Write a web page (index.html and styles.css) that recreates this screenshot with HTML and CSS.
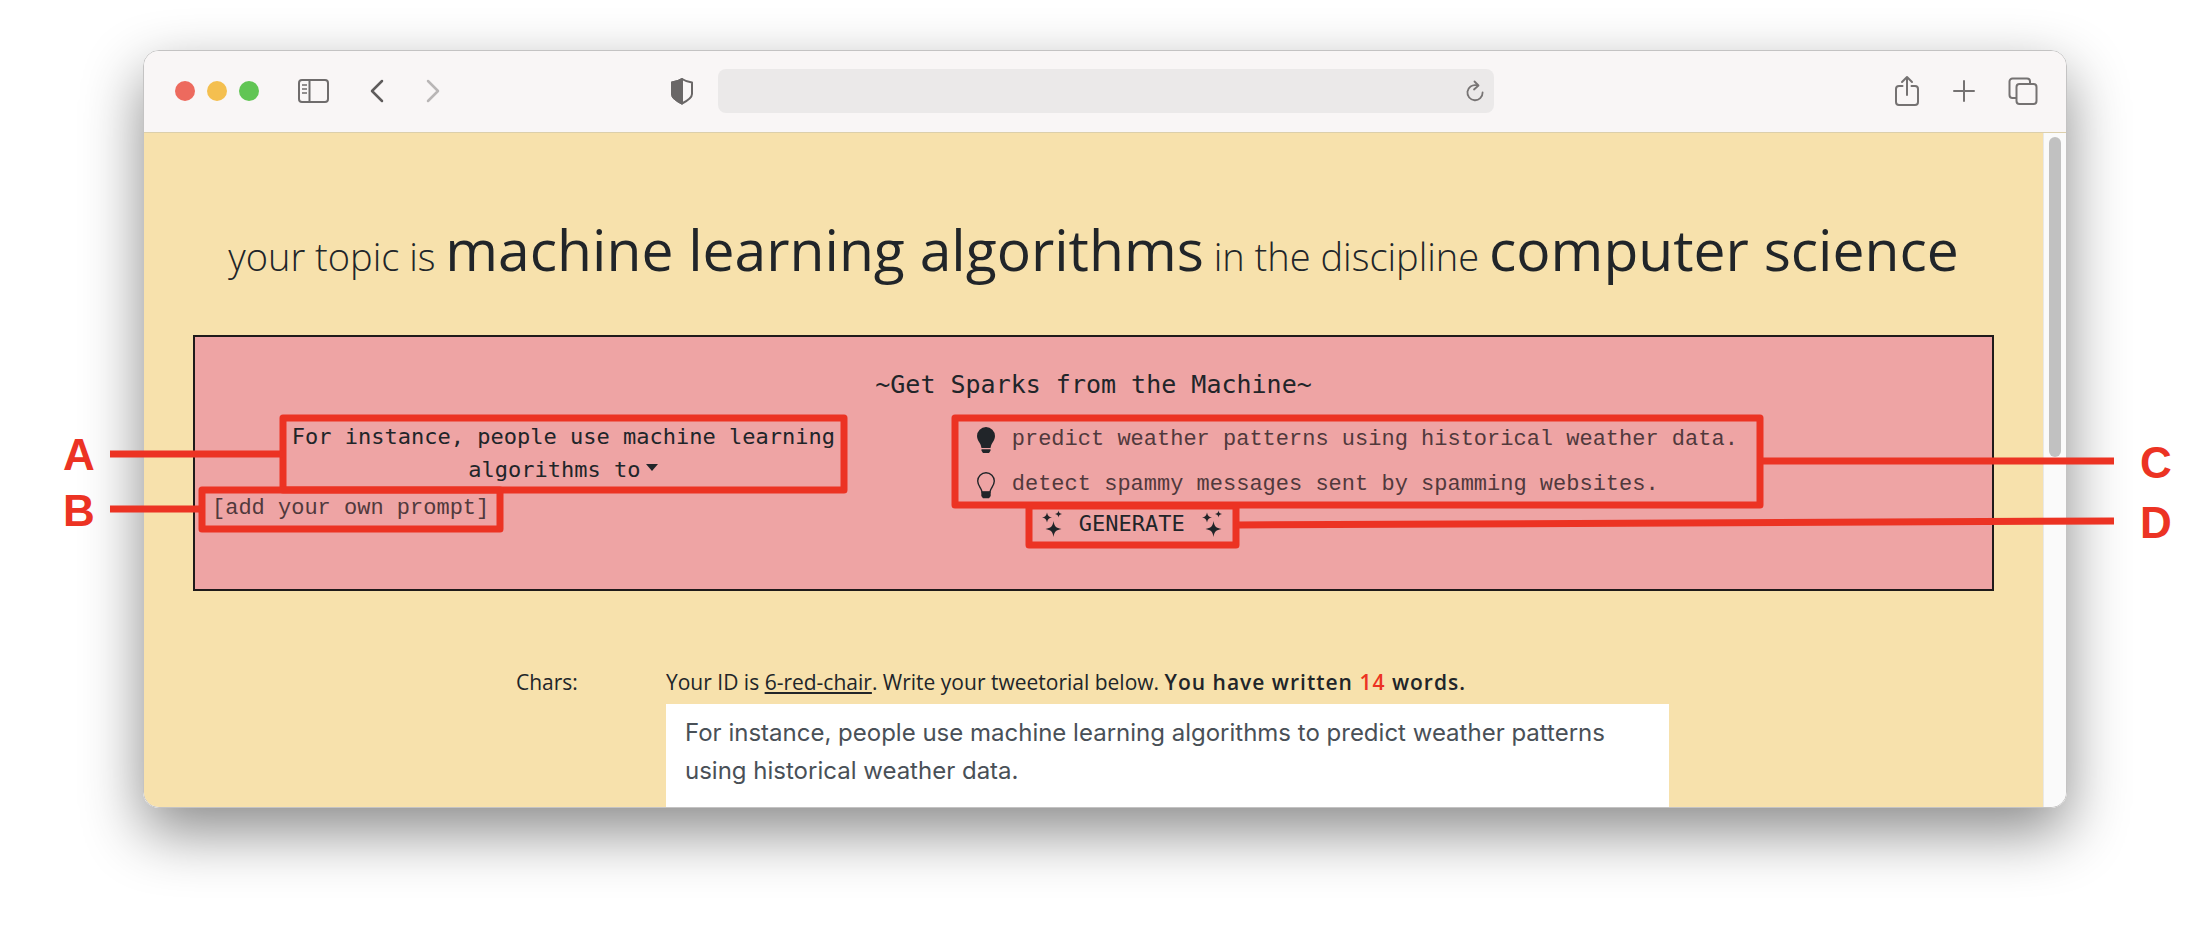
FILE: index.html
```html
<!DOCTYPE html>
<html lang="en">
<head>
    <meta charset="UTF-8">
    <meta name="viewport" content="width=device-width, initial-scale=1.0">
    <title>Sparks</title>
    <link rel="stylesheet" href="styles.css">
</head>
<body>
    <div class="window">
        <div class="toolbar">
            <div class="tools tools-left">
                <div class="lights">
                    <span class="light light-red"></span>
                    <span class="light light-yellow"></span>
                    <span class="light light-green"></span>
                </div>
                <button class="tool tool-sidebar" aria-label="Sidebar">
                    <svg width="32" height="26" viewBox="0 0 32 26" fill="none" stroke="#6f6c6c" stroke-width="2">
                        <rect x="1" y="2" width="29" height="22" rx="3"/>
                        <path d="M11.500 2v22"/>
                        <path d="M4 7h5M4 11h5M4 15h5" stroke-width="1.500"/>
                    </svg>
                </button>
                <button class="tool" aria-label="Back">
                    <svg width="16" height="26" viewBox="0 0 16 26" fill="none" stroke="#5f5c5c" stroke-width="2.500" stroke-linecap="round" stroke-linejoin="round"><path d="M13 3L3 13l10 10"/></svg>
                </button>
                <button class="tool tool-forward" aria-label="Forward">
                    <svg width="16" height="26" viewBox="0 0 16 26" fill="none" stroke="#b9b6b6" stroke-width="2.500" stroke-linecap="round" stroke-linejoin="round"><path d="M3 3l10 10L3 23"/></svg>
                </button>
            </div>
            <button class="tool" aria-label="Privacy report">
                <svg width="24" height="28" viewBox="0 0 24 28" fill="none" stroke="#6a6767" stroke-width="2" stroke-linejoin="round">
                    <path d="M12 2C9 4 5.500 5 2 5.500V17c0 4 5 7 10 9.500C17 24 22 21 22 17V5.500C18.500 5 15 4 12 2z"/>
                    <path d="M12 2C9 4 5.500 5 2 5.500V17c0 4 5 7 10 9.500z" fill="#6a6767"/>
                </svg>
            </button>
            <div class="address">
                <input class="address-input" type="text" aria-label="Address">
                <button class="tool" aria-label="Reload">
                    <svg width="18" height="22" viewBox="0 0 18 22" fill="none" stroke="#777474" stroke-width="1.800" stroke-linecap="round">
                        <path d="M10.500 5.200A7.600 7.600 0 1 0 16.600 12.500"/>
                        <path d="M8.500 1.500l4 4-4.500 4" stroke-linejoin="round"/>
                    </svg>
                </button>
            </div>
            <div class="tools tools-right">
                <button class="tool" aria-label="Share">
                    <svg width="26" height="32" viewBox="0 0 26 32" fill="none" stroke="#757272" stroke-width="2" stroke-linecap="round" stroke-linejoin="round">
                        <path d="M8.500 11H5a3 3 0 0 0-3 3v13a3 3 0 0 0 3 3h16a3 3 0 0 0 3-3V14a3 3 0 0 0-3-3h-3.500"/>
                        <path d="M13 20V2M8 7l5-5 5 5"/>
                    </svg>
                </button>
                <button class="tool" aria-label="New tab">
                    <svg width="24" height="24" viewBox="0 0 24 24" fill="none" stroke="#757272" stroke-width="2" stroke-linecap="round"><path d="M12 2v20M2 12h20"/></svg>
                </button>
                <button class="tool" aria-label="Tabs">
                    <svg width="30" height="28" viewBox="0 0 30 28" fill="none" stroke="#757272" stroke-width="2" stroke-linejoin="round">
                        <rect x="8.500" y="7" width="20" height="20" rx="3"/>
                        <path d="M8 21H4.500a3 3 0 0 1-3-3V4.500a3 3 0 0 1 3-3H19a3 3 0 0 1 3 3V7"/>
                    </svg>
                </button>
            </div>
        </div>

        <div class="view">
            <main class="page">
                <h1 class="topic">your topic is <strong>machine learning algorithms</strong> in the discipline <strong>computer science</strong></h1>

                <section class="sparks">
                    <h2 class="sparks-title">~Get Sparks from the Machine~</h2>
                    <div class="sparks-row">
                        <div class="prompts">
                            <button class="prompt-current" aria-haspopup="true">For instance, people use machine learning algorithms to<span class="caret"></span></button>
                            <button class="prompt-add">[add your own prompt]</button>
                        </div>
                        <div class="results">
                            <ul class="spark-list">
                                <li class="spark">
                                    <svg width="20" height="28" viewBox="0 0 20 28" fill="#212529">
                                        <path d="M10 1a9 9 0 0 0-9 9c0 3 1.500 5 3 7.500.8 1.300 1 2.500 1.500 4.500h9c.5-2 .7-3.200 1.500-4.500C17.500 15 19 13 19 10a9 9 0 0 0-9-9z"/>
                                        <path d="M5.500 23.300h9v1.500l-1.500 2.200H7l-1.500-2.200z"/>
                                    </svg>
                                    <span>predict weather patterns using historical weather data.</span>
                                </li>
                                <li class="spark">
                                    <svg width="20" height="28" viewBox="0 0 20 28" fill="none" stroke="#212529" stroke-width="1.400">
                                        <path d="M10 1.700a8.300 8.300 0 0 0-8.300 8.300c0 3 1.500 5 3 7.500.8 1.300 1 2.200 1.300 3.500h8c.3-1.300.5-2.200 1.300-3.500 1.500-2.500 3-4.500 3-7.500A8.300 8.300 0 0 0 10 1.700z"/>
                                        <path d="M6 21.500h8v3.300L12.700 26.500H7.300L6 24.800z" fill="#212529"/>
                                    </svg>
                                    <span>detect spammy messages sent by spamming websites.</span>
                                </li>
                            </ul>
                            <button class="generate">
                                <svg width="20" height="28" viewBox="0 0 20 28" fill="#212529">
                                    <path d="M11.500 11c1 5.500 2.500 7 8 8-5.500 1-7 2.500-8 8-1-5.500-2.500-7-8-8 5.500-1 7-2.500 8-8z"/>
                                    <path d="M5 2.500c.6 3.200 1.800 4.400 5 5-3.200.6-4.400 1.800-5 5-.6-3.200-1.800-4.400-5-5 3.200-.6 4.400-1.800 5-5z"/>
                                    <path d="M16.500.5c.4 2.200 1.300 3.100 3.500 3.500-2.200.4-3.100 1.300-3.500 3.500-.4-2.200-1.300-3.100-3.500-3.500 2.200-.4 3.100-1.300 3.500-3.500z"/>
                                </svg>
                                GENERATE
                                <svg width="20" height="28" viewBox="0 0 20 28" fill="#212529">
                                    <path d="M11.500 11c1 5.500 2.500 7 8 8-5.500 1-7 2.500-8 8-1-5.500-2.500-7-8-8 5.500-1 7-2.500 8-8z"/>
                                    <path d="M5 2.500c.6 3.200 1.800 4.400 5 5-3.200.6-4.400 1.800-5 5-.6-3.200-1.800-4.400-5-5 3.200-.6 4.400-1.800 5-5z"/>
                                    <path d="M16.500.5c.4 2.200 1.300 3.100 3.500 3.500-2.200.4-3.100 1.300-3.500 3.500-.4-2.200-1.300-3.100-3.500-3.500 2.200-.4 3.100-1.300 3.500-3.500z"/>
                                </svg>
                            </button>
                        </div>
                    </div>
                </section>

                <section class="editor">
                    <div class="chars">Chars:</div>
                    <div class="editor-main">
                        <label class="editor-label" for="tweetorial">Your ID is <u>6-red-chair</u>. Write your tweetorial below. <b>You have written <span class="count">14</span> words.</b></label>
                        <textarea class="editor-text" id="tweetorial">For instance, people use machine learning algorithms to predict weather patterns using historical weather data.</textarea>
                    </div>
                </section>
            </main>
            <div class="scrollbar"><div class="thumb"></div></div>
        </div>
    </div>

    <!-- lettered callouts drawn over the window -->
    <svg class="callouts" viewBox="0 0 2211 938">
        <g fill="none" stroke="#ec3323" stroke-width="7" stroke-linejoin="round">
            <rect x="283" y="418" width="561" height="72"/>
            <rect x="202" y="490" width="298" height="39"/>
            <rect x="955" y="418" width="805" height="87"/>
            <rect x="1029" y="506" width="207" height="39"/>
            <path d="M110 454H283M110 509H202M1760 461H2114M1236 525L2114 521"/>
        </g>
        <g class="letters">
            <text x="63" y="470">A</text>
            <text x="63" y="526">B</text>
            <text x="2140" y="478">C</text>
            <text x="2140" y="538">D</text>
        </g>
    </svg>
</body>
</html>
```

FILE: styles.css
```css
* {
    box-sizing: border-box;
}

body {
    display: flex;
    height: 100vh;
    margin: 0;
    padding: 50px 144px 130px 143px;
    background: #fff;
    color: #212529;
    font-family: "Open Sans", sans-serif;
    font-size: 21px;
}

button {
    padding: 0;
    border: none;
    background: none;
    color: inherit;
    font: inherit;
    cursor: pointer;
}

svg {
    display: block;
    flex: none;
}

.window {
    display: flex;
    flex: 1;
    flex-direction: column;
    min-width: 0;
    overflow: hidden;
    border: 1px solid #c4c3c3;
    border-radius: 16px;
    box-shadow: 0 24px 60px rgba(0, 0, 0, 0.46);
}

/* browser toolbar */

.toolbar {
    display: flex;
    flex: none;
    align-items: center;
    height: 82px;
    padding-bottom: 2px;
    border-bottom: 1px solid #dccfab;
    background: #f9f6f6;
}

.tools {
    display: flex;
    align-items: center;
}

.tools-left {
    flex: 10;
    padding-left: 31px;
}

.tools-right {
    flex: 11;
    justify-content: flex-end;
    gap: 32px;
    padding-right: 28px;
}

.lights {
    display: flex;
    gap: 12px;
}

.light {
    width: 20px;
    height: 20px;
    border-radius: 50%;
}

.light-red { background: #ed6a5e; }
.light-yellow { background: #f4bf4f; }
.light-green { background: #61c554; }

.tool-sidebar {
    margin: 0 39px;
}

.tool-forward {
    margin-left: 40px;
}

.address {
    display: flex;
    align-items: center;
    width: 776px;
    height: 44px;
    margin-left: 24px;
    padding-right: 10px;
    border-radius: 8px;
    background: #ebe9e9;
}

.address-input {
    flex: 1;
    border: none;
    background: none;
}

/* page */

.view {
    display: flex;
    flex: 1;
    min-height: 0;
}

.page {
    flex: 1;
    min-width: 0;
    padding: 68px 49px 0;
    overflow: hidden;
    background: #f7e1ac;
}

.scrollbar {
    width: 23px;
    padding: 4px 5px;
    border-left: 1px solid #e8e8e8;
    background: #fafafa;
}

.thumb {
    width: 12px;
    height: 320px;
    border-radius: 6px;
    background: #c1c1c1;
}

.topic {
    margin: 0 0 31px;
    font-size: 38px;
    font-weight: 300;
    line-height: 96px;
    text-align: center;
    white-space: nowrap;
}

.topic strong {
    font-size: 57px;
    font-weight: 400;
}

.sparks {
    height: 256px;
    padding-top: 30px;
    border: 2px solid #1f1a1a;
    background: #eea4a4;
    font-family: "Liberation Mono", monospace;
    font-size: 22px;
    line-height: 33px;
}

.sparks-title {
    margin: 0 0 14px;
    font-family: "DejaVu Sans Mono", monospace;
    font-size: 25px;
    font-weight: 400;
    line-height: 36px;
    text-align: center;
}

.sparks-row {
    display: grid;
    grid-template-columns: 41% 1fr;
}

.prompts {
    display: flex;
    flex-direction: column;
    align-items: flex-start;
    gap: 6px;
    padding: 3px 17px 0;
}

.prompt-current {
    width: 100%;
    padding: 0 60px;
    font-family: "DejaVu Sans Mono", monospace;
    text-align: center;
}

.caret {
    display: inline-block;
    margin-left: 6px;
    border: 6px solid transparent;
    border-top: 7px solid #212529;
    border-bottom: none;
    vertical-align: 6px;
}

.prompt-add,
.spark {
    color: #51393c;
}

.results {
    padding-left: 44px;
}

.spark-list {
    margin: 0;
    padding: 0;
    list-style: none;
}

.spark {
    display: flex;
    align-items: center;
    gap: 16px;
    height: 45px;
}

.generate {
    display: flex;
    align-items: center;
    gap: 17px;
    margin-left: 66px;
    font-family: "DejaVu Sans Mono", monospace;
}

.editor {
    display: flex;
    padding-top: 77px;
    padding-left: 323px;
}

.chars {
    width: 150px;
    line-height: 28px;
}

.editor-main {
    width: 1003px;
}

.editor-label {
    display: block;
    margin-bottom: 8px;
    line-height: 28px;
}

.editor-label b {
    font-weight: 600;
    letter-spacing: 1px;
}

.count {
    color: #ec3323;
}

.editor-text {
    display: block;
    width: 100%;
    height: 240px;
    padding: 10px 19px;
    border: none;
    background: #fff;
    color: #495057;
    font-family: Inter, sans-serif;
    font-size: 24px;
    line-height: 38px;
    resize: none;
}

/* callouts */

.callouts {
    position: absolute;
    top: 0;
    left: 0;
    width: 100%;
    pointer-events: none;
}

.letters {
    fill: #ec3323;
    font-family: "Liberation Sans", sans-serif;
    font-size: 44px;
    font-weight: 700;
}
```
